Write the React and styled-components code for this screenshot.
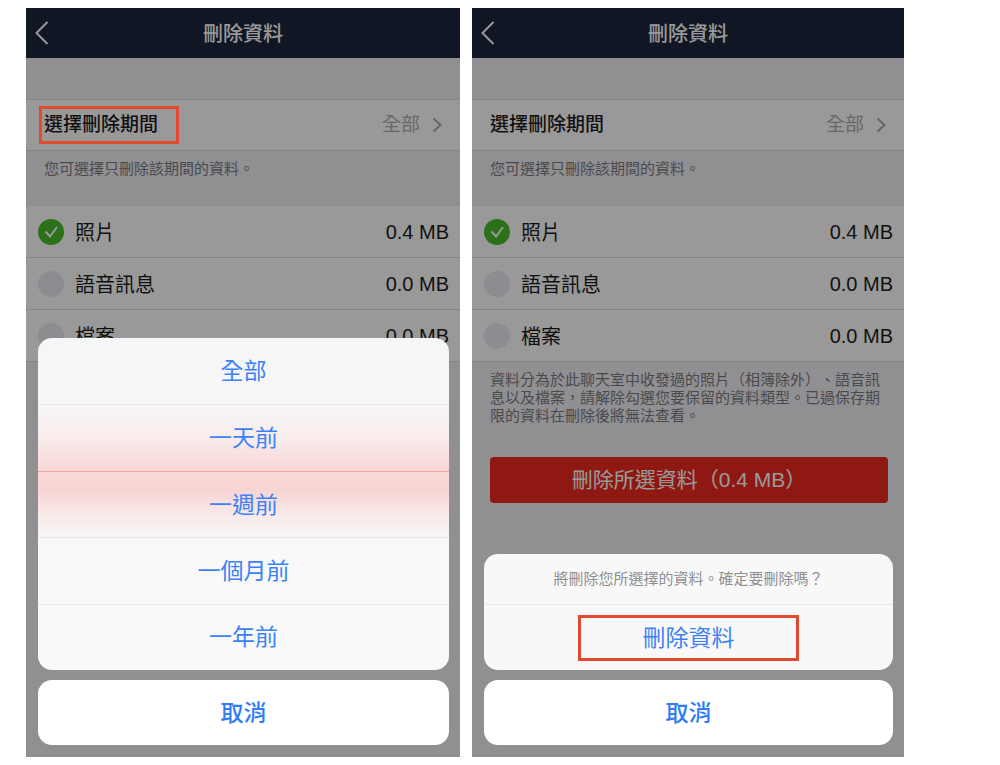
import styled, { createGlobalStyle, css } from 'styled-components';

const categories = [
  { id: 'photos', name: '照片', size: '0.4 MB', checked: true },
  { id: 'voice', name: '語音訊息', size: '0.0 MB', checked: false },
  { id: 'files', name: '檔案', size: '0.0 MB', checked: false },
];

const periods = ['全部', '一天前', '一週前', '一個月前', '一年前'];

function Screen({ id, marked, footer, children }) {
  return (
    <Phone>
      <TopBar>
        <BackButton type="button" aria-label="返回">
          <svg width="14" height="24" viewBox="0 0 14 24" fill="none" stroke="currentColor" strokeWidth="2">
            <path d="M12.5 1 1.5 12l11 11" />
          </svg>
        </BackButton>
        <Title>刪除資料</Title>
      </TopBar>

      <PeriodRow type="button">
        <PeriodLabel $marked={marked}>選擇刪除期間</PeriodLabel>
        <PeriodValue>
          全部
          <svg width="10" height="16" viewBox="0 0 10 16" fill="none" stroke="currentColor" strokeWidth="2">
            <path d="m1.5 1.5 7 6.5-7 6.5" />
          </svg>
        </PeriodValue>
      </PeriodRow>
      <Note>您可選擇只刪除該期間的資料。</Note>

      <List>
        {categories.map((item) => (
          <Row key={item.id}>
            <CheckSlot>
              <Check type="checkbox" id={`${id}-${item.id}`} defaultChecked={item.checked} />
              <svg width="26" height="26" viewBox="0 0 26 26" fill="none" stroke="#fff" strokeWidth="2">
                <path d="m7.5 12.5 4.5 5 7-9.5" />
              </svg>
            </CheckSlot>
            <RowLabel htmlFor={`${id}-${item.id}`}>{item.name}</RowLabel>
            <span>{item.size}</span>
          </Row>
        ))}
      </List>

      {footer}
      <Backdrop>{children}</Backdrop>
    </Phone>
  );
}

function App() {
  return (
    <>
      <GlobalStyle />
      <Page>
        <Screen id="period" marked>
          <PeriodOptions>
            {periods.map((period) => (
              <Option key={period} type="button" $warm={period === '一週前'}>
                {period}
              </Option>
            ))}
          </PeriodOptions>
          <Cancel type="button">取消</Cancel>
        </Screen>

        <Screen
          id="confirm"
          footer={
            <>
              <Note>
                資料分為於此聊天室中收發過的照片（相簿除外）、語音訊息以及檔案，請解除勾選您要保留的資料類型。已過保存期限的資料在刪除後將無法查看。
              </Note>
              <DeleteButton type="button">刪除所選資料（0.4 MB）</DeleteButton>
            </>
          }
        >
          <Options>
            <Message>將刪除您所選擇的資料。確定要刪除嗎？</Message>
            <Option type="button">
              <Marked>刪除資料</Marked>
            </Option>
          </Options>
          <Cancel type="button">取消</Cancel>
        </Screen>
      </Page>
    </>
  );
}

export default App;

const GlobalStyle = createGlobalStyle`
  * {
    box-sizing: border-box;
  }

  body {
    margin: 0;
    background: #fff;
    font-family: 'Liberation Sans', 'Noto Sans CJK TC', sans-serif;
    text-spacing-trim: space-all;
  }

  button {
    border: 0;
    padding: 0;
    background: none;
    font: inherit;
    color: inherit;
    cursor: pointer;
  }
`;

const Page = styled.main`
  display: grid;
  grid-template-columns: 434fr 432fr;
  gap: 12px;
  min-height: 100vh;
  padding: 8px 96px 8px 26px;
`;

const Phone = styled.section`
  position: relative;
  display: flex;
  flex-direction: column;
  background: #f0eff3;
`;

const TopBar = styled.header`
  display: grid;
  grid-template-columns: 40px 1fr 40px;
  align-items: center;
  height: 50px;
  margin-bottom: 41px;
  background: #1b253b;
  color: #fff;
`;

const BackButton = styled.button`
  display: flex;
  padding-left: 9px;
`;

const Title = styled.h1`
  margin: 0;
  padding-top: 2px;
  font-size: 20px;
  line-height: 28px;
  font-weight: 500;
  text-align: center;
`;

const PeriodRow = styled.button`
  display: flex;
  align-items: center;
  justify-content: space-between;
  height: 52px;
  padding: 0 18px;
  border-top: 1px solid #dedee0;
  border-bottom: 1px solid #dedee0;
  background: #fff;
  font-size: 19px;
  line-height: 28px;
`;

const redFrame = css`
  border: 3px solid #e24a30;
`;

const PeriodLabel = styled.span`
  position: relative;
  color: #1c1c1c;
  font-weight: 500;

  /* the frame lies above the dimmed backdrop */
  ${({ $marked }) =>
    $marked &&
    css`
      &::after {
        content: '';
        position: absolute;
        z-index: 2;
        inset: -5px -21px -5px -5px;
        ${redFrame}
      }
    `}
`;

const PeriodValue = styled.span`
  display: flex;
  align-items: center;
  gap: 12px;
  color: #acacae;
`;

const Note = styled.p`
  margin: 0;
  padding: 9px 16px 0 18px;
  min-height: 55px;
  color: #7c7c82;
  font-size: 15px;
  line-height: 18px;
`;

const List = styled.ul`
  margin: 0;
  padding: 0;
  list-style: none;
`;

const Row = styled.li`
  display: flex;
  align-items: center;
  gap: 11px;
  height: 52px;
  padding: 0 11px 0 12px;
  border-bottom: 1px solid #dedee0;
  background: #fff;
  color: #1c1c1c;
  font-size: 20px;
  line-height: 28px;
`;

const CheckSlot = styled.span`
  display: grid;

  > * {
    grid-area: 1 / 1;
  }

  svg {
    pointer-events: none;
  }

  input:not(:checked) + svg {
    visibility: hidden;
  }
`;

const Check = styled.input`
  appearance: none;
  width: 26px;
  height: 26px;
  margin: 0;
  border-radius: 50%;
  background: #e9e9f2;

  &:checked {
    background: #4abb2c;
  }
`;

const RowLabel = styled.label`
  flex: 1;
  padding-top: 2px;
`;

const DeleteButton = styled.button`
  height: 46px;
  margin: 32px 16px 0 18px;
  border-radius: 4px;
  background: #ee2b1e;
  color: #fff;
  font-size: 21px;
  line-height: 28px;
`;

const Backdrop = styled.div`
  position: absolute;
  inset: 0;
  display: flex;
  flex-direction: column;
  justify-content: flex-end;
  gap: 10px;
  padding: 12px 11px 12px 12px;
  background: rgba(0, 0, 0, 0.4);
`;

const Options = styled.div`
  display: flex;
  flex-direction: column;
  overflow: hidden;
  border-radius: 14px;
  background: #f8f8f8;
`;

const PeriodOptions = styled(Options)`
  height: 332px;
  background: linear-gradient(
    #f5f6f7 0%,
    #f8f7f7 20%,
    #f9ecec 30%,
    #f8d8d8 39%,
    #f8d5d5 46%,
    #f9ebeb 54%,
    #f9f9f9 62%
  );
`;

const Option = styled.button`
  display: flex;
  flex: 1 0 66px;
  align-items: center;
  justify-content: center;
  border-top: 1px solid ${({ $warm }) => ($warm ? '#f3a3a3' : '#e9e8e9')};
  color: #3c82f7;
  font-size: 23px;
  line-height: 32px;

  &:first-child {
    border-top: 0;
  }
`;

const Message = styled.p`
  margin: 0;
  padding: 15px 12px;
  color: #8f8f91;
  font-size: 15px;
  line-height: 20px;
  text-align: center;
`;

const Marked = styled.span`
  width: 54%;
  padding: 4px 0;
  ${redFrame}
`;

const Cancel = styled.button`
  height: 65px;
  border-radius: 14px;
  background: #fff;
  color: #2f7cf6;
  font-size: 23px;
  line-height: 32px;
  font-weight: 500;
`;
